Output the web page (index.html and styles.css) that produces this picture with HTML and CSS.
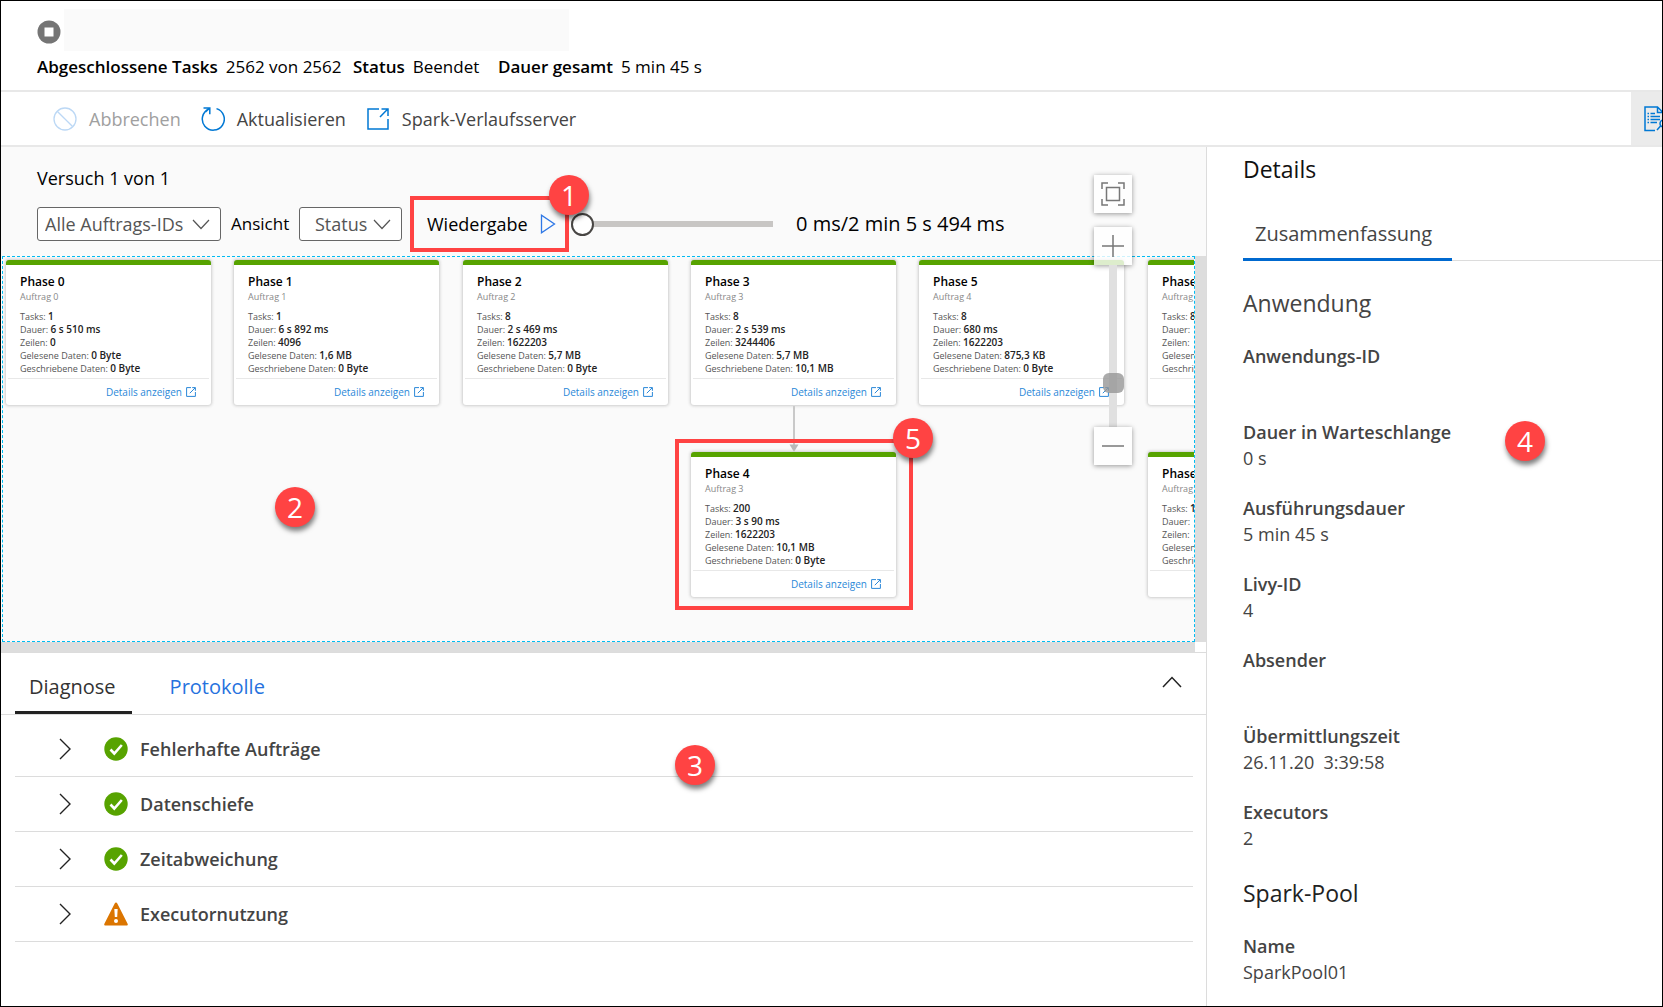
FILE: index.html
```html
<!DOCTYPE html>
<html lang="de">
<head>
<meta charset="utf-8">
<meta name="viewport" content="width=device-width, initial-scale=1">
<title>Spark-Anwendung</title>
<link rel="stylesheet" href="styles.css">
</head>
<body>
<svg class="sprite" aria-hidden="true">
  <symbol id="i-chevron-down" viewBox="0 0 18 11"><path d="M1 1l8 8.500l8-8.500" fill="none" stroke="currentColor" stroke-width="1.200"/></symbol>
  <symbol id="i-chevron-right" viewBox="0 0 13 22"><path d="M1 1l10 10L1 21" fill="none" stroke="currentColor" stroke-width="1.400"/></symbol>
  <symbol id="i-open" viewBox="0 0 10 10"><path d="M5 .6H.6v8.800h8.800V5M3.800 6.200L9.200.8M6.200.6h3.200v3.200" fill="none" stroke="currentColor"/></symbol>
  <symbol id="i-ok" viewBox="0 0 24 24"><circle cx="12" cy="12" r="11.700" fill="#57a300"/><path d="M6.500 12.500l3.800 4L17.800 8" fill="none" stroke="#fff" stroke-width="2.600"/></symbol>
  <symbol id="i-warn" viewBox="0 0 24 24"><path d="M12 .5c.6 0 1 .3 1.300.9l10.300 20.300c.5 1 0 1.800-1 1.800H1.400c-1 0-1.500-.8-1-1.800L10.700 1.400c.3-.6.7-.9 1.300-.9z" fill="#db7500"/><path d="M10.300 7h3.400l-.5 8h-2.400z" fill="#fff"/><circle cx="12" cy="19" r="2" fill="#fff"/></symbol>
</svg>
<div class="frame">
  <header class="app-header">
    <div class="title-row">
      <svg class="stop-icon" viewBox="0 0 24 24" aria-hidden="true"><circle cx="12" cy="12" r="11.500" fill="#757575"/><rect x="7.500" y="7.500" width="9" height="9" fill="#fff"/></svg>
      <div class="app-name"></div>
    </div>
    <dl class="facts">
      <div class="fact fact-tasks"><dt>Abgeschlossene Tasks</dt><dd>2562 von 2562</dd></div>
      <div class="fact fact-status"><dt>Status</dt><dd>Beendet</dd></div>
      <div class="fact"><dt>Dauer gesamt</dt><dd>5 min 45 s</dd></div>
    </dl>
  </header>

  <nav class="toolbar">
    <button class="tool" disabled>
      <svg viewBox="0 0 24 24" aria-hidden="true"><circle cx="12" cy="12" r="11" fill="none" stroke="currentColor" stroke-width="1.300"/><path d="M4.200 4.200l15.600 15.600" stroke="currentColor" stroke-width="1.300"/></svg>
      Abbrechen
    </button>
    <button class="tool">
      <svg viewBox="0 0 24 24" aria-hidden="true"><path d="M15.500 1.600A11 11 0 1 1 8 2M2.500 1h6.300v6.200M8.800 1L4.500 5" fill="none" stroke="currentColor" stroke-width="1.500"/></svg>
      Aktualisieren
    </button>
    <button class="tool">
      <svg viewBox="0 0 24 24" aria-hidden="true"><path d="M13 2H2v20h20V12M14 10l8-8.200M15.500 2H22v7" fill="none" stroke="currentColor" stroke-width="1.500"/></svg>
      Spark-Verlaufsserver
    </button>
    <button class="details-toggle" aria-label="Details">
      <svg viewBox="0 0 24 26" aria-hidden="true"><path d="M11 24.500H1V1h12.500L19 6.500V12M13.500 1v5.500H19M3.500 7.500H5m1.500 0H11M3.500 10.500H5m1.500 0H16M3.500 13.500H5m1.500 0H16M3.500 16.500H5m1.500 0H13M13 24l4-4.500" fill="none" stroke="currentColor" stroke-width="1.500"/><circle cx="19.500" cy="17.500" r="3.500" fill="none" stroke="currentColor" stroke-width="1.500"/></svg>
    </button>
  </nav>

  <div class="workspace">
    <main class="main-pane">
      <section class="graph">
        <div class="graph-head">
          <p class="attempt">Versuch 1 von 1</p>
          <div class="controls">
            <span class="select select-job">
              <select aria-label="Auftrags-ID"><option>Alle Auftrags-IDs</option></select>
              <svg aria-hidden="true"><use href="#i-chevron-down"/></svg>
            </span>
            <label class="view-label" for="view">Ansicht</label>
            <span class="select select-view">
              <select id="view"><option>Status</option></select>
              <svg aria-hidden="true"><use href="#i-chevron-down"/></svg>
            </span>
            <div class="callout-play">
              <button class="play">Wiedergabe
                <svg viewBox="0 0 16 20" aria-hidden="true"><path d="M1.500 1.200v17.600L14.500 10z" fill="none" stroke="#2f78e6" stroke-width="1.300"/></svg>
              </button>
              <span class="badge badge-corner">1</span>
            </div>
            <input class="timeline" type="range" min="0" max="100" value="0" aria-label="Zeitachse">
            <output class="elapsed">0 ms/2 min 5 s 494 ms</output>
          </div>
        </div>

        <div class="scroller">
          <div class="canvas">
            <svg class="edge" viewBox="0 0 10 46" aria-hidden="true"><path d="M5 0v40" stroke="#b8b8b8" stroke-width="1.500"/><path d="M.5 38.500h9L5 46z" fill="#b8b8b8"/></svg>

            <article class="stage c1 r1">
              <h3>Phase 0</h3><p class="job">Auftrag 0</p>
              <ul><li>Tasks: <b>1</b></li><li>Dauer: <b>6 s 510 ms</b></li><li>Zeilen: <b>0</b></li><li>Gelesene Daten: <b>0 Byte</b></li><li>Geschriebene Daten: <b>0 Byte</b></li></ul>
              <footer><a href="#">Details anzeigen <svg aria-hidden="true"><use href="#i-open"/></svg></a></footer>
            </article>
            <article class="stage c2 r1">
              <h3>Phase 1</h3><p class="job">Auftrag 1</p>
              <ul><li>Tasks: <b>1</b></li><li>Dauer: <b>6 s 892 ms</b></li><li>Zeilen: <b>4096</b></li><li>Gelesene Daten: <b>1,6 MB</b></li><li>Geschriebene Daten: <b>0 Byte</b></li></ul>
              <footer><a href="#">Details anzeigen <svg aria-hidden="true"><use href="#i-open"/></svg></a></footer>
            </article>
            <article class="stage c3 r1">
              <h3>Phase 2</h3><p class="job">Auftrag 2</p>
              <ul><li>Tasks: <b>8</b></li><li>Dauer: <b>2 s 469 ms</b></li><li>Zeilen: <b>1622203</b></li><li>Gelesene Daten: <b>5,7 MB</b></li><li>Geschriebene Daten: <b>0 Byte</b></li></ul>
              <footer><a href="#">Details anzeigen <svg aria-hidden="true"><use href="#i-open"/></svg></a></footer>
            </article>
            <article class="stage c4 r1">
              <h3>Phase 3</h3><p class="job">Auftrag 3</p>
              <ul><li>Tasks: <b>8</b></li><li>Dauer: <b>2 s 539 ms</b></li><li>Zeilen: <b>3244406</b></li><li>Gelesene Daten: <b>5,7 MB</b></li><li>Geschriebene Daten: <b>10,1 MB</b></li></ul>
              <footer><a href="#">Details anzeigen <svg aria-hidden="true"><use href="#i-open"/></svg></a></footer>
            </article>
            <article class="stage c5 r1">
              <h3>Phase 5</h3><p class="job">Auftrag 4</p>
              <ul><li>Tasks: <b>8</b></li><li>Dauer: <b>680 ms</b></li><li>Zeilen: <b>1622203</b></li><li>Gelesene Daten: <b>875,3 KB</b></li><li>Geschriebene Daten: <b>0 Byte</b></li></ul>
              <footer><a href="#">Details anzeigen <svg aria-hidden="true"><use href="#i-open"/></svg></a></footer>
            </article>
            <article class="stage c6 r1">
              <h3>Phase</h3><p class="job">Auftrag</p>
              <ul><li>Tasks: <b>8</b></li><li>Dauer:</li><li>Zeilen:</li><li>Gelesene Daten:</li><li>Geschriebene Daten:</li></ul>
              <footer></footer>
            </article>
            <article class="stage c4 r2">
              <h3>Phase 4</h3><p class="job">Auftrag 3</p>
              <ul><li>Tasks: <b>200</b></li><li>Dauer: <b>3 s 90 ms</b></li><li>Zeilen: <b>1622203</b></li><li>Gelesene Daten: <b>10,1 MB</b></li><li>Geschriebene Daten: <b>0 Byte</b></li></ul>
              <footer><a href="#">Details anzeigen <svg aria-hidden="true"><use href="#i-open"/></svg></a></footer>
            </article>
            <article class="stage c6 r2">
              <h3>Phase</h3><p class="job">Auftrag</p>
              <ul><li>Tasks: <b>1</b></li><li>Dauer:</li><li>Zeilen:</li><li>Gelesene Daten:</li><li>Geschriebene Daten:</li></ul>
              <footer></footer>
            </article>

            <div class="callout-stage"><span class="badge badge-corner">5</span></div>
            <span class="badge badge-canvas">2</span>
          </div>
          <div class="bar-v"></div>
          <div class="bar-h"></div>
        </div>

        <div class="zoomer">
          <button class="zoom-btn" aria-label="Einpassen"><svg viewBox="0 0 24 24" aria-hidden="true"><path d="M1 7V1h6M17 1h6v6M23 17v6h-6M7 23H1v-6M5.500 5.500h13v13h-13z" fill="none" stroke="currentColor" stroke-width="1.500"/></svg></button>
          <div class="zoom-stack">
            <button class="zoom-btn" aria-label="Vergrößern"><svg viewBox="0 0 24 24" aria-hidden="true"><path d="M12 1v22M1 12h22" stroke="currentColor" stroke-width="1.500"/></svg></button>
            <input class="zoom-range" type="range" min="0" max="100" value="24" aria-label="Zoom">
            <button class="zoom-btn" aria-label="Verkleinern"><svg viewBox="0 0 24 24" aria-hidden="true"><path d="M1 12h22" stroke="currentColor" stroke-width="1.500"/></svg></button>
          </div>
        </div>
      </section>

      <section class="diagnostics">
        <div class="tabs">
          <button class="tab tab-active">Diagnose</button>
          <button class="tab">Protokolle</button>
          <button class="collapse" aria-label="Einklappen"><svg viewBox="0 0 20 12" aria-hidden="true"><path d="M1 11l9-9.500L19 11" fill="none" stroke="currentColor" stroke-width="1.500"/></svg></button>
        </div>
        <ul class="checks">
          <li><svg class="chev" aria-hidden="true"><use href="#i-chevron-right"/></svg><svg class="state" aria-hidden="true"><use href="#i-ok"/></svg>Fehlerhafte Aufträge</li>
          <li><svg class="chev" aria-hidden="true"><use href="#i-chevron-right"/></svg><svg class="state" aria-hidden="true"><use href="#i-ok"/></svg>Datenschiefe</li>
          <li><svg class="chev" aria-hidden="true"><use href="#i-chevron-right"/></svg><svg class="state" aria-hidden="true"><use href="#i-ok"/></svg>Zeitabweichung</li>
          <li><svg class="chev" aria-hidden="true"><use href="#i-chevron-right"/></svg><svg class="state" aria-hidden="true"><use href="#i-warn"/></svg>Executornutzung</li>
        </ul>
        <span class="badge badge-diagnostics">3</span>
      </section>
    </main>

    <aside class="details">
      <h2>Details</h2>
      <div class="details-tabs"><button class="details-tab">Zusammenfassung</button></div>
      <h3 class="group">Anwendung</h3>
      <dl class="props">
        <div><dt>Anwendungs-ID</dt><dd></dd></div>
        <div><dt>Dauer in Warteschlange</dt><dd>0 s</dd></div>
        <div><dt>Ausführungsdauer</dt><dd>5 min 45 s</dd></div>
        <div><dt>Livy-ID</dt><dd>4</dd></div>
        <div><dt>Absender</dt><dd></dd></div>
        <div><dt>Übermittlungszeit</dt><dd>26.11.20&nbsp; 3:39:58</dd></div>
        <div><dt>Executors</dt><dd>2</dd></div>
      </dl>
      <h3 class="group group-pool">Spark-Pool</h3>
      <dl class="props">
        <div><dt>Name</dt><dd>SparkPool01</dd></div>
      </dl>
      <span class="badge badge-details">4</span>
    </aside>
  </div>
</div>
</body>
</html>
```
FILE: styles.css
```css
* { box-sizing: border-box; }
body, h2, h3, p, ul, dl, dd { margin: 0; padding: 0; }
ul { list-style: none; }

body {
  font: 17px/24px "Open Sans", "Noto Sans", sans-serif;
  color: #000;
  background: #fff;
}
button, select, input { font: inherit; color: inherit; margin: 0; }
button { padding: 0; border: 0; background: none; }
svg { display: block; flex: none; }
.sprite { position: absolute; width: 0; height: 0; }

.frame {
  display: flex;
  flex-direction: column;
  min-height: 100vh;
  border: 1px solid #000;
  overflow: hidden;
}

/* Header */
.app-header {
  padding: 8px 36px 11px;
  border-bottom: 2px solid #e8e8e8;
}
.title-row { display: flex; align-items: center; gap: 3px; }
.stop-icon { width: 24px; height: 24px; margin-top: 4px; }
.app-name { width: 505px; height: 42px; background: #fafafa; }
.facts { display: flex; margin-top: 4px; }
.fact { display: flex; gap: 8px; white-space: nowrap; }
.fact dt { font-weight: 600; }
.fact-tasks { width: 316px; }
.fact-status { width: 145px; }

/* Command bar */
.toolbar {
  display: flex;
  align-items: stretch;
  gap: 20px;
  height: 55px;
  padding-left: 52px;
  border-bottom: 2px solid #e8e8e8;
}
.tool {
  display: flex;
  align-items: center;
  gap: 12px;
  font-size: 18px;
  color: #444;
}
.tool svg { width: 24px; height: 24px; color: #0078d4; }
.tool:disabled { color: #a0a0a0; }
.tool:disabled svg { color: #bcd8f5; }
.details-toggle {
  display: flex;
  align-items: center;
  width: 31px;
  margin-left: auto;
  padding-left: 13px;
  overflow: hidden;
  background: #ebebeb;
  color: #0078d4;
}
.details-toggle svg { width: 24px; height: 26px; }

/* Workspace */
.workspace { display: flex; flex: 1; }
.main-pane { flex: 1; min-width: 0; border-right: 1px solid #dcdcdc; }

.graph { position: relative; background: #fafafa; }
.graph-head { padding: 19px 36px 4px; }
.attempt { font-size: 18px; }
.controls { display: flex; align-items: center; margin-top: 6px; }

.select { position: relative; }
.select select {
  width: 100%;
  height: 34px;
  border: 1px solid #666;
  border-radius: 3px;
  background: #fff;
  color: #555;
  font-size: 18px;
  appearance: none;
}
.select svg {
  position: absolute;
  right: 11px;
  top: 12px;
  width: 18px;
  height: 11px;
  color: #555;
  pointer-events: none;
}
.select-job { width: 184px; }
.select-job select { padding: 0 0 0 7px; }
.select-view { width: 103px; }
.select-view select { padding: 0 0 0 15px; }
.view-label { width: 78px; padding-left: 10px; }

.callout-play {
  position: relative;
  margin-left: 8px;
  border: 4px solid #ff4343;
}
.play {
  display: flex;
  align-items: center;
  justify-content: space-between;
  width: 151px;
  height: 48px;
  padding: 0 9px 0 13px;
  font-size: 18px;
}
.play svg { width: 16px; height: 20px; }

.timeline {
  width: 202px;
  height: 24px;
  margin-left: 2px;
  appearance: none;
  background: linear-gradient(#c8c6c4, #c8c6c4) center / 100% 6px no-repeat;
}
.timeline::-webkit-slider-thumb {
  appearance: none;
  width: 23px;
  height: 23px;
  border: 2px solid #484644;
  border-radius: 50%;
  background: #fff;
}
.elapsed { margin-left: 23px; font-size: 20px; white-space: nowrap; }

/* Graph canvas */
.scroller {
  display: grid;
  grid-template-columns: 1fr 11px;
  grid-template-rows: auto 10px;
  background: #fff;
}
.canvas {
  position: relative;
  min-height: 386px;
  margin-left: 1px;
  border: 1px dashed #00bcf2;
  background: #fafafa;
  overflow: hidden;
}
.bar-v, .bar-h { background: #ddd; }

.stage {
  position: absolute;
  width: 205px;
  border-top: 5px solid #57a300;
  border-radius: 3px;
  background: #fff;
  box-shadow: 0 0 3px 1px #ccc;
  font-size: 10px;
  line-height: 13px;
  color: #555;
}
.c1 { left: 3px; }
.c2 { left: 231px; }
.c3 { left: 460px; }
.c4 { left: 688px; }
.c5 { left: 916px; }
.c6 { left: 1145px; }
.r1 { top: 3px; }
.r2 { top: 195px; }
.stage h3 {
  padding: 9px 14px 0;
  font-size: 12px;
  line-height: 16px;
  font-weight: 600;
  color: #000;
}
.job { padding: 0 14px; color: #888; font-size: 9px; }
.stage ul { padding: 7px 14px 3px; white-space: nowrap; font-size: 9px; }
.stage li { height: 13px; }
.stage b { font-size: 10px; font-weight: 600; color: #222; }
.stage footer {
  display: flex;
  justify-content: flex-end;
  align-items: center;
  height: 27px;
  margin: 0 2px;
  padding-right: 13px;
  border-top: 1px solid #e8e8e8;
}
.stage a {
  display: flex;
  align-items: center;
  gap: 4px;
  color: #2b88d8;
  text-decoration: none;
}
.stage a svg { width: 10px; height: 10px; }
.edge { position: absolute; left: 786px; top: 149px; width: 10px; height: 46px; }

/* Numbered callouts */
.badge {
  position: absolute;
  z-index: 2;
  width: 40px;
  height: 40px;
  border-radius: 50%;
  background: #ff4343;
  box-shadow: 1px 4px 5px rgba(0, 0, 0, .5);
  color: #fff;
  font-size: 28px;
  line-height: 40px;
  text-align: center;
}
.badge-corner { top: -25px; right: -24px; }
.badge-canvas { left: 272px; top: 230px; }
.badge-diagnostics { left: 674px; top: 92px; }
.badge-details { left: 298px; top: 274px; }
.callout-stage {
  position: absolute;
  z-index: 1;
  left: 672px;
  top: 182px;
  width: 238px;
  height: 171px;
  border: 4px solid #ff4343;
}

/* Zoom control */
.zoomer {
  position: absolute;
  top: 28px;
  right: 74px;
  display: flex;
  flex-direction: column;
  gap: 14px;
}
.zoom-stack { display: flex; flex-direction: column; align-items: center; }
.zoom-btn {
  display: grid;
  place-items: center;
  width: 38px;
  height: 38px;
  background: rgba(255, 255, 255, .8);
  box-shadow: 0 1px 5px rgba(0, 0, 0, .4);
  color: #777;
}
.zoom-btn svg { width: 24px; height: 24px; }
.zoom-range {
  width: 22px;
  height: 162px;
  writing-mode: vertical-lr;
  direction: rtl;
  appearance: none;
  background: linear-gradient(#e0e0e0, #e0e0e0) center / 8px 100% no-repeat;
}
.zoom-range::-webkit-slider-thumb {
  appearance: none;
  width: 21px;
  height: 20px;
  border-radius: 6px;
  background: rgba(150, 150, 150, .8);
}

/* Diagnostics */
.diagnostics { position: relative; border-top: 1px solid #dcdcdc; }
.tabs {
  display: flex;
  height: 62px;
  padding: 0 24px 0 14px;
  border-bottom: 1px solid #dcdcdc;
}
.tab {
  padding: 9px 16px 0 14px;
  margin-right: 24px;
  border-bottom: 3px solid transparent;
  font-size: 20px;
  color: #2672de;
}
.tab-active { border-color: #222; color: #333; }
.collapse { margin-left: auto; padding-bottom: 4px; color: #222; }
.collapse svg { width: 20px; height: 12px; }
.checks { margin: 7px 13px 0 14px; }
.checks li {
  display: flex;
  align-items: center;
  height: 55px;
  padding-left: 44px;
  border-bottom: 1px solid #dcdcdc;
  font-size: 18px;
  font-weight: 600;
  color: #444;
}
.chev { width: 13px; height: 22px; color: #222; }
.state { width: 24px; height: 24px; margin: 0 12px 0 32px; }

/* Details pane */
.details { position: relative; flex: none; width: 455px; padding-left: 36px; color: #444; }
.details h2, .group { font-size: 23px; line-height: 28px; font-weight: 500; }
.details h2 { margin-top: 8px; color: #111; }
.details-tabs { display: flex; margin-top: 24px; box-shadow: inset 0 -1px #dcdcdc; }
.details-tab {
  height: 54px;
  padding: 3px 20px 0 12px;
  border-bottom: 3px solid #0069cf;
  font-size: 20px;
}
.group { margin-top: 28px; }
.props { margin-top: 26px; font-size: 18px; line-height: 26px; }
.props > div + div { margin-top: 24px; }
.props dt { font-weight: 600; }
.props dd { min-height: 26px; }
.group-pool { color: #222; }
```
